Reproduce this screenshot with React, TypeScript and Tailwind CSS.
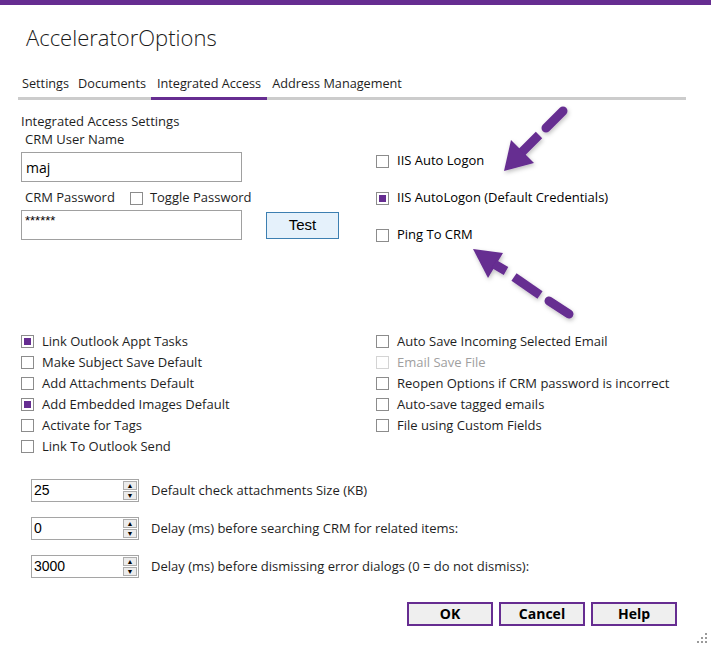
import React from "react";

const font = "font-['Open_Sans',_'Noto_Sans',_sans-serif]";

const Box = ({ checked, disabled }: { checked?: boolean; disabled?: boolean }) => (
  <span
    className={`flex h-[13px] w-[13px] shrink-0 bg-white p-[2px] border ${
      disabled ? "border-[#d4d4d4]" : "border-[#8c8c8c]"
    }`}
  >
    {checked && <span className="flex-1 bg-[#662d91]" />}
  </span>
);

const Check = ({
  label,
  checked,
  disabled,
}: {
  label: string;
  checked?: boolean;
  disabled?: boolean;
}) => (
  <div className="flex h-[21px] items-center gap-[8px]">
    <Box checked={checked} disabled={disabled} />
    <span className={disabled ? "text-[#a0a0a0]" : "text-[#1e1e1e]"}>{label}</span>
  </div>
);

const Spinner = ({ value, label }: { value: string; label: string }) => (
  <div className="flex items-center gap-[12px]">
    <div className="flex h-[23px] w-[108px] border border-[#a5a5a5] bg-white">
      <span className="flex-1 pl-[2px] font-['Liberation_Sans',_sans-serif] text-[14px] leading-[21px] text-black">
        {value}
      </span>
      <div className="my-[1px] mr-[1px] flex w-[14px] flex-col gap-[1px]">
        <span className="flex flex-1 items-center justify-center border border-[#adadad] bg-[#ececec] text-[7px] leading-none text-black">
          ▲
        </span>
        <span className="flex flex-1 items-center justify-center border border-[#adadad] bg-[#ececec] text-[7px] leading-none text-black">
          ▼
        </span>
      </div>
    </div>
    <span className="text-[#1e1e1e]">{label}</span>
  </div>
);

const Arrows = () => (
  <svg className="pointer-events-none absolute inset-0" width="711" height="649">
    <defs>
      <filter id="sh" x="-20%" y="-20%" width="140%" height="140%">
        <feDropShadow dx="1" dy="2" stdDeviation="2" floodColor="#000" floodOpacity="0.25" />
      </filter>
    </defs>
    <g fill="#662d91" stroke="#662d91" filter="url(#sh)">
      {/* top arrow, tip (504,171) */}
      <polygon points="504,171 511,140 534,163" stroke="none" />
      <line x1="522" y1="152" x2="539" y2="135" strokeWidth="9" />
      <line x1="546" y1="128" x2="563" y2="111" strokeWidth="9" strokeLinecap="round" />
      {/* bottom arrow, tip (473,249) */}
      <polygon points="473,249 503,253 488,278" stroke="none" />
      <line x1="494" y1="264" x2="506" y2="271" strokeWidth="9" />
      <line x1="514" y1="277" x2="540" y2="295" strokeWidth="9" />
      <line x1="549" y1="301" x2="569" y2="314" strokeWidth="9" strokeLinecap="round" />
    </g>
  </svg>
);

export default function App() {
  return (
    <div className={`relative h-[649px] w-[711px] overflow-hidden bg-white text-[13px] ${font}`}>
      <div className="h-[5px] bg-[#662d91]" />

      {/* Title */}
      <div className="pl-[26px] pt-[16px] text-[22px] font-light leading-[32px] text-[#1a1a1a]">
        AcceleratorOptions
      </div>

      {/* Tabs */}
      <div className="ml-[18px] mt-[21px] flex w-[668px] border-b-[3px] border-[#cccccc] text-[12.7px] leading-[18px] text-[#1e1e1e]">
        <span className="px-[4px] pb-[5px]">Settings</span>
        <span className="px-[5px] pb-[5px]">Documents</span>
        <span className="-mb-[3px] border-b-[3px] border-[#662d91] px-[6px] pb-[5px]">Integrated Access</span>
        <span className="px-[5px] pb-[5px]">Address Management</span>
      </div>

      {/* Top section */}
      <div className="flex h-[231px]">
        <div className="w-[376px] pl-[21px]">
          <div className="mt-[13px] leading-[16px] text-[#1e1e1e]">Integrated Access Settings</div>
          <div className="mt-[2px] pl-[4px] leading-[16px] text-[#1e1e1e]">CRM User Name</div>
          <div className="mt-[5px] flex h-[30px] w-[221px] items-center border border-[#a0a0a0] pl-[4px] text-[14px] text-black">
            maj
          </div>
          <div className="mt-[6px] flex h-[20px] items-center pl-[4px] text-[#1e1e1e]">
            <span>CRM Password</span>
            <span className="ml-[15px] flex items-center gap-[7px]">
              <Box />
              <span>Toggle Password</span>
            </span>
          </div>
          <div className="mt-[2px] flex items-start gap-[24px]">
            <div className="flex h-[30px] w-[221px] items-start border border-[#a0a0a0] pl-[3px] pt-[3px] font-['Liberation_Sans',_sans-serif] text-[13px] leading-[14px] text-black">
              ******
            </div>
            <button className="mt-[2px] h-[27px] w-[73px] border border-[#3c7fb1] bg-[#e5f1fb] font-['Liberation_Sans',_sans-serif] text-[15px] text-black">
              Test
            </button>
          </div>
        </div>

        <div className="flex flex-col gap-[21px] pt-[53px]">
          <div className="flex h-[16px] items-center gap-[8px]">
            <Box />
            <span>IIS Auto Logon</span>
          </div>
          <div className="flex h-[16px] items-center gap-[8px]">
            <Box checked />
            <span>IIS AutoLogon (Default Credentials)</span>
          </div>
          <div className="flex h-[16px] items-center gap-[8px]">
            <Box />
            <span>Ping To CRM</span>
          </div>
        </div>
      </div>

      {/* Options */}
      <div className="flex">
        <div className="w-[376px] pl-[21px]">
          <Check label="Link Outlook Appt Tasks" checked />
          <Check label="Make Subject Save Default" />
          <Check label="Add Attachments Default" />
          <Check label="Add Embedded Images Default" checked />
          <Check label="Activate for Tags" />
          <Check label="Link To Outlook Send" />
        </div>
        <div>
          <Check label="Auto Save Incoming Selected Email" />
          <Check label="Email Save File" disabled />
          <Check label="Reopen Options if CRM password is incorrect" />
          <Check label="Auto-save tagged emails" />
          <Check label="File using Custom Fields" />
        </div>
      </div>

      {/* Spinners */}
      <div className="mt-[22px] flex flex-col gap-[15px] pl-[31px]">
        <Spinner value="25" label="Default check attachments Size (KB)" />
        <Spinner value="0" label="Delay (ms) before searching CRM for related items:" />
        <Spinner value="3000" label="Delay (ms) before dismissing error dialogs (0 = do not dismiss):" />
      </div>

      {/* Buttons */}
      <div className="mt-[24px] flex justify-end gap-[6px] pr-[34px]">
        {["OK", "Cancel", "Help"].map((b) => (
          <button
            key={b}
            className="h-[24px] w-[86px] border-2 border-[#662d91] bg-[#efefef] text-[14px] font-bold leading-[20px] text-black"
          >
            {b}
          </button>
        ))}
      </div>

      {/* Resize grip */}
      <svg className="absolute bottom-[5px] right-[3px]" width="11" height="11" fill="#9a9a9a">
        <rect x="8" y="0" width="2" height="2" />
        <rect x="4" y="4" width="2" height="2" />
        <rect x="8" y="4" width="2" height="2" />
        <rect x="0" y="8" width="2" height="2" />
        <rect x="4" y="8" width="2" height="2" />
        <rect x="8" y="8" width="2" height="2" />
      </svg>

      <Arrows />
    </div>
  );
}
